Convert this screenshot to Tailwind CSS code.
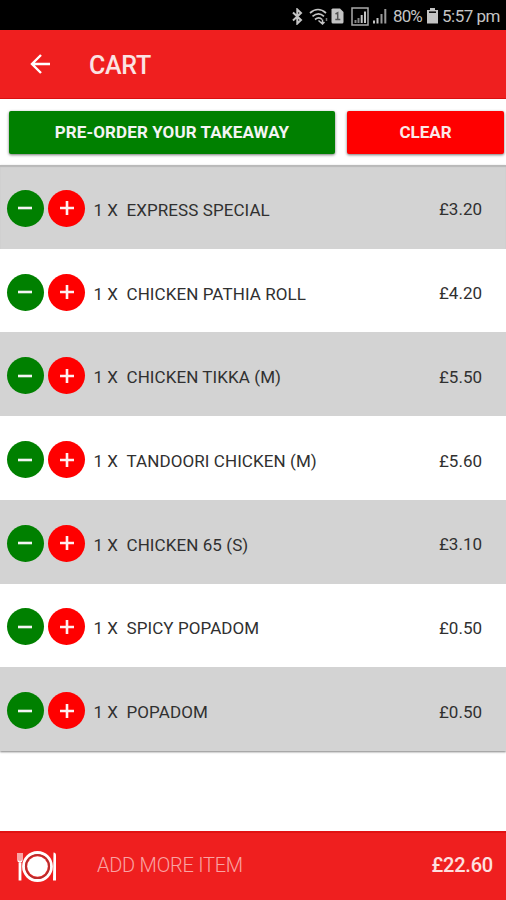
<!DOCTYPE html>
<html lang="en">
<head>
  <meta charset="UTF-8" />
  <meta name="viewport" content="width=device-width, initial-scale=1.0" />
  <title>Cart</title>
  <script src="https://cdn.jsdelivr.net/npm/@tailwindcss/browser@4"></script>
</head>
<body class="bg-white font-[Roboto,sans-serif]">
  <div class="w-[506px] h-[900px] flex flex-col overflow-hidden">

    <!-- Status bar -->
    <div class="h-[30px] shrink-0 bg-black flex items-center justify-end pr-[6px] pt-[2px] text-[#c4c4c4]">
      <svg class="w-[11px] h-[17px]" viewBox="0 0 11 17" fill="none" stroke="currentColor" stroke-width="2">
        <path d="M1 4.5l8 7.5-3.7 3.5v-14L9 5 1 12.5" />
      </svg>
      <svg class="w-[20px] h-[17px] ml-[6px]" viewBox="0 0 20 17" fill="none" stroke="currentColor" stroke-width="1.7">
        <path d="M1 5c5-4.500 11-4.500 16 0M3.500 8.300c4-3.300 8-3.300 11.500 0M6 11.500c2.500-2 5-2 7 0" />
        <path d="M9.500 12.500l4 3.500v-4.500M11.500 14l2 2 2-2" stroke-width="1.500" />
        <path d="M17.500 10v3" stroke="#777" stroke-width="1.500" />
      </svg>
      <svg class="w-[13px] h-[16px] ml-[2px] mr-[1px]" viewBox="0 0 13 16">
        <path d="M1.500 0.500H9L12.500 4v10q0 1.500-1.500 1.500H2Q0.500 15.500 0.500 14V1.500z" fill="currentColor" />
        <path d="M4.500 6l2.200-1.300V11M4.300 11.500h5" fill="none" stroke="#555" stroke-width="1.500" />
      </svg>
      <svg class="w-[18px] h-[19px] ml-[6px]" viewBox="0 0 18 19" fill="none" stroke="currentColor">
        <rect x="1" y="1" width="16" height="17" stroke="#aaa" stroke-width="1.500" />
        <path d="M4.500 16v-3M7.500 16v-5" stroke="#888" stroke-width="2" />
        <path d="M10.700 16V8M14 16V4.500" stroke-width="2" />
      </svg>
      <svg class="w-[15px] h-[16px] ml-[3px]" viewBox="0 0 15 16" fill="none" stroke="currentColor" stroke-width="2">
        <path d="M2 15.500v-3M5.500 15.500V10" />
        <path d="M9.500 15.500V6M13.300 15.500V1" stroke="#999" />
      </svg>
      <span class="w-[29px] ml-[6px] text-[17px] leading-none tracking-[-0.9px] whitespace-nowrap">80%</span>
      <svg class="w-[11px] h-[16px] ml-[5px]" viewBox="0 0 11 16" fill="currentColor">
        <path d="M3 0h5v2h3v13.500H0V2h3z" />
        <path d="M2 4.200h7" stroke="#111" stroke-width="1.600" />
      </svg>
      <span class="w-[58px] ml-[4px] text-[17px] leading-none tracking-[-0.5px] whitespace-nowrap">5:57 pm</span>
    </div>

    <!-- Toolbar -->
    <header class="h-[69px] shrink-0 bg-[#ef1f1f] border-b border-[#d90f0f] flex items-center">
      <svg class="w-[20px] h-[20px] ml-[30px]" viewBox="0 0 20 20" fill="none" stroke="white" stroke-width="2.400">
        <path d="M11 1l-9 9 9 9M2 10h18" />
      </svg>
      <h1 class="ml-[39px] pt-[3px] text-[25px] font-medium leading-none text-[#fbe3e3] tracking-[-0.3px]">CART</h1>
    </header>

    <!-- Actions -->
    <div class="h-[66px] shrink-0 flex items-start pt-[12px] pl-[9px] gap-[12px]">
      <button class="w-[326px] h-[43px] pt-px rounded-[2px] bg-[#008000] text-[#f4f4f4] text-[17px] font-bold tracking-[0.1px] shadow-[0_1px_3px_rgba(0,0,0,0.55)]">PRE-ORDER YOUR TAKEAWAY</button>
      <button class="w-[157px] h-[43px] pt-px rounded-[2px] bg-[#ff0000] text-[#fbe8e8] text-[17px] font-bold shadow-[0_1px_3px_rgba(0,0,0,0.55)]">CLEAR</button>
    </div>

    <!-- Cart items -->
    <ul id="items" class="h-[586px] shrink-0 flex flex-col shadow-[0_1px_2px_rgba(0,0,0,0.5)]"></ul>

    <div class="flex-1"></div>

    <!-- Footer -->
    <footer class="h-[69px] shrink-0 bg-[#ef1f1f] border-t-2 border-[#e01212] flex items-center pl-[17px] pr-[13px]">
      <svg class="w-[41px] h-[32px]" viewBox="0 0 41 32" fill="none" stroke="white">
        <circle cx="20.500" cy="15.500" r="14" stroke-width="2.800" />
        <circle cx="20.500" cy="15.500" r="11.600" stroke="#a33" stroke-width="1.400" />
        <circle cx="20.500" cy="15.500" r="10.300" fill="white" stroke="none" />
        <path d="M1 2v7q0 2 2 2t2-2V2M3 2v26" stroke-width="1.200" />
        <path d="M3 12v17.500" stroke-width="2.800" />
        <path d="M36.500 1.500q2.500 0 2.500 3v25h-3z" fill="white" stroke="none" />
      </svg>
      <span class="ml-[39px] pb-[3px] text-[20px] font-light leading-none tracking-[-0.25px] text-[#f9a3a3]">ADD MORE ITEM</span>
      <span class="ml-auto pb-[3px] text-[20px] font-medium leading-none tracking-[-0.2px] text-[#fde0e0]">£22.60</span>
    </footer>
  </div>

  <script>
    const items = [
      { name: "EXPRESS SPECIAL", price: "£3.20" },
      { name: "CHICKEN PATHIA ROLL", price: "£4.20" },
      { name: "CHICKEN TIKKA (M)", price: "£5.50" },
      { name: "TANDOORI CHICKEN (M)", price: "£5.60" },
      { name: "CHICKEN 65 (S)", price: "£3.10" },
      { name: "SPICY POPADOM", price: "£0.50" },
      { name: "POPADOM", price: "£0.50" },
    ];

    document.getElementById("items").innerHTML = items.map((item) => `
      <li class="flex-1 flex items-center pl-[6.5px] pr-[24px] pt-[3px] text-[17px] leading-none text-[#303030] odd:bg-[#d3d3d3] even:bg-white first:shadow-[inset_0_2px_1px_#b9b9b9]">
        <button class="w-[37px] h-[37px] rounded-full bg-[#008000] flex items-center justify-center">
          <svg class="w-[14px] h-[14px]" viewBox="0 0 14 14" stroke="#f4f4f4" stroke-width="2.600"><path d="M0 7h14" /></svg>
        </button>
        <button class="w-[37px] h-[37px] ml-[4.500px] rounded-full bg-[#ff0000] flex items-center justify-center">
          <svg class="w-[14px] h-[14px]" viewBox="0 0 14 14" stroke="#fff0f0" stroke-width="2.600"><path d="M0 7h14M7 0v14" /></svg>
        </button>
        <span class="w-[33px] ml-[8.5px] pt-[4px]">1 X</span>
        <span class="pt-[4px] whitespace-nowrap tracking-[0.08px]">${item.name}</span>
        <span class="ml-auto pt-[3px]">${item.price}</span>
      </li>`).join("");
  </script>
</body>
</html>
